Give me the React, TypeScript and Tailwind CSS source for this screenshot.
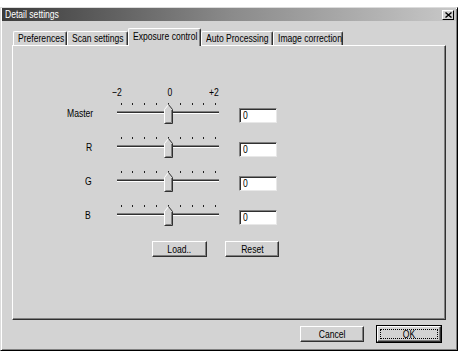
import React from 'react';

const font = "font-['Liberation_Sans',Arial,sans-serif]";

const tabs = [
  { label: 'Preferences', w: 'w-[54px]' },
  { label: 'Scan settings', w: 'w-[61px]' },
  { label: 'Exposure control', w: 'w-[73px]', active: true },
  { label: 'Auto Processing', w: 'w-[72px]' },
  { label: 'Image correction', w: 'w-[70px]' },
];

const rows = [
  { label: 'Master', pad: 'pl-[54px]' },
  { label: 'R', pad: 'pl-[73px]' },
  { label: 'G', pad: 'pl-[72px]' },
  { label: 'B', pad: 'pl-[72px]' },
];

// the dialog font is narrow, so the text is squeezed horizontally
function T({ children, center }: { children: React.ReactNode; center?: boolean }) {
  return (
    <span className={`inline-block whitespace-nowrap scale-x-[0.78] ${center ? 'origin-center' : 'origin-left'}`}>
      {children}
    </span>
  );
}

function Slider() {
  const ticks = Array.from({ length: 9 }, (_, i) => 6.5 + i * 11.85);
  return (
    <svg width="108" height="28" viewBox="0 0 108 28" className="shrink-0 mt-[3px]">
      {ticks.map((x, i) => (
        <rect key={i} x={Math.round(x)} y={4} width={1} height={2} fill="#202020" />
      ))}
      <rect x="3" y="12" width="102" height="1" fill="#808080" />
      <rect x="3" y="13" width="102" height="1" fill="#303030" />
      <rect x="3" y="14" width="102" height="1" fill="#ffffff" />
      <polygon points="50.5,24.5 50.5,10.5 54.5,5.5 58.5,10.5 58.5,24.5" fill="#d3d3d3" />
      <polyline points="50.5,24.5 50.5,10.5 54.5,5.5" fill="none" stroke="#ffffff" strokeWidth="1" />
      <polyline points="54.5,5.5 58.5,10.5 58.5,24.5 50.5,24.5" fill="none" stroke="#303030" strokeWidth="1" />
      <polyline points="57.5,11 57.5,23.5 51.5,23.5" fill="none" stroke="#808080" strokeWidth="1" />
    </svg>
  );
}

function Button({ label, className }: { label: string; className: string }) {
  return (
    <div
      className={`flex items-center justify-center bg-[#d3d3d3] border border-t-white border-l-white border-r-[#303030] border-b-[#303030] shadow-[inset_-1px_-1px_#808080] text-black text-[11px] leading-none ${className}`}
    >
      <T center>{label}</T>
    </div>
  );
}

export default function App() {
  return (
    <div className={`w-[459px] h-[351px] bg-white pt-[7px] overflow-hidden ${font}`}>
      <div className="w-[458px] h-[344px] bg-[#d3d3d3] border border-t-[#dcdcdc] border-l-[#dcdcdc] border-r-black border-b-black shadow-[inset_1px_1px_#fff,inset_-1px_-1px_#808080] flex flex-col px-[1px]">
        {/* Title bar */}
        <div className="h-[13px] flex items-center justify-between bg-gradient-to-r from-[#3c3c3c] via-[#8a8a8a] to-[#c8c8c8] pl-[3px] pr-[2px]">
          <span className="text-white text-[11px] leading-none">
            <T>Detail settings</T>
          </span>
          <div className="w-[12px] h-[10px] bg-[#d3d3d3] border border-t-white border-l-white border-r-black border-b-black flex items-center justify-center">
            <svg width="7" height="6" viewBox="0 0 7 6">
              <path d="M0.5 0.5 L6.5 5.5 M6.5 0.5 L0.5 5.5" stroke="#000" strokeWidth="1.4" />
            </svg>
          </div>
        </div>

        {/* Tabs */}
        <div className="mt-[7px] h-[17px] flex items-end pl-[11px]">
          {tabs.map((t) =>
            t.active ? (
              <div
                key={t.label}
                className={`${t.w} h-[18px] -mb-[1px] relative z-10 bg-[#d3d3d3] rounded-t-[2px] border-t border-l border-r border-t-white border-l-white border-r-[#303030] shadow-[inset_-1px_0_#808080] pl-[4px] pt-[2px] text-[11px] leading-[11px] text-black overflow-hidden`}
              >
                <T>{t.label}</T>
              </div>
            ) : (
              <div
                key={t.label}
                className={`${t.w} h-[14px] bg-[#d3d3d3] rounded-t-[2px] border-t border-l border-r border-t-white border-l-white border-r-[#303030] shadow-[inset_-1px_0_#808080] pl-[4px] pt-[1px] text-[11px] leading-[11px] text-black overflow-hidden`}
              >
                <T>{t.label}</T>
              </div>
            )
          )}
        </div>

        {/* Panel */}
        <div className="ml-[10px] w-[434px] h-[275px] border border-t-white border-l-white border-r-[#303030] border-b-[#303030] shadow-[inset_-1px_-1px_#808080] pt-[36px] text-[11px] text-black">
          <div className="relative h-[14px]">
            <span className="absolute left-[104px] top-[5px] -translate-x-1/2 leading-[10px]"><T center>−2</T></span>
            <span className="absolute left-[157px] top-[5px] -translate-x-1/2 leading-[10px]"><T center>0</T></span>
            <span className="absolute left-[201px] top-[5px] -translate-x-1/2 leading-[10px]"><T center>+2</T></span>
          </div>

          {rows.map((r) => (
            <div key={r.label} className="flex h-[34px]">
              <div className={`w-[101px] shrink-0 h-[34px] flex items-center ${r.pad}`}>
                <T>{r.label}</T>
              </div>
              <Slider />
              <div className="ml-[17px] mt-[12px] w-[38px] h-[15px] bg-white border border-t-[#808080] border-l-[#808080] border-r-[#e8e8e8] border-b-[#e8e8e8] shadow-[inset_1px_1px_#303030] pl-[3px] flex items-center leading-none">
                <T>0</T>
              </div>
            </div>
          ))}

          <div className="flex mt-[9px]">
            <Button label="Load.." className="ml-[139px] w-[55px] h-[16px]" />
            <Button label="Reset" className="ml-[18px] w-[54px] h-[16px]" />
          </div>
        </div>

        {/* Dialog buttons */}
        <div className="mt-[5px] flex items-center justify-end gap-[12px] pr-[14px]">
          <Button label="Cancel" className="w-[64px] h-[16px]" />
          <div className="w-[66px] h-[18px] border border-black">
            <div className="w-full h-full bg-[#d3d3d3] border border-t-white border-l-white border-r-[#303030] border-b-[#303030] shadow-[inset_-1px_-1px_#808080] p-[2px]">
              <div className="w-full h-full border border-dotted border-black flex items-center justify-center text-[11px] leading-none text-black">
                <T center>OK</T>
              </div>
            </div>
          </div>
        </div>
      </div>
    </div>
  );
}
